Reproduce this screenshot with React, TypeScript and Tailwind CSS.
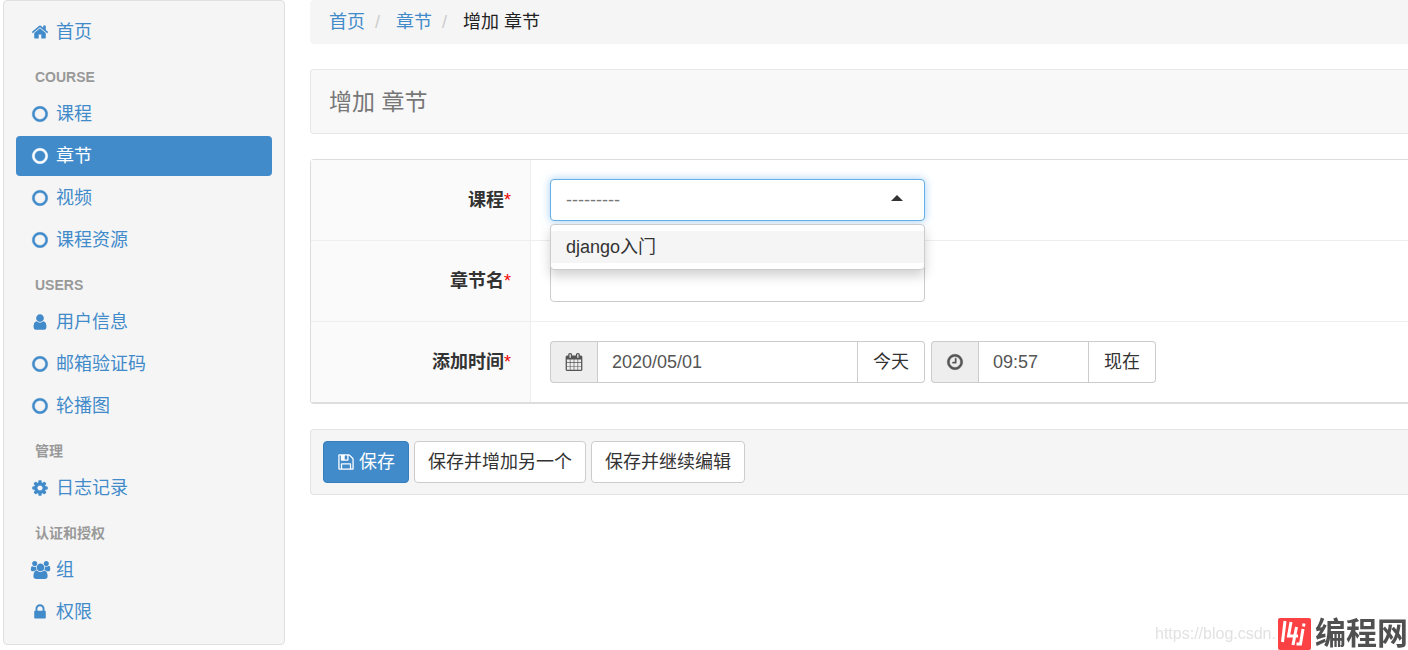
import { useState, type ReactNode } from "react";

const icons = {
  home: "M1472 992v480q0 26-19 45t-45 19h-384v-384h-256v384h-384q-26 0-45-19t-19-45v-480q0-1 .5-3t.5-3l575-474 575 474q1 2 1 6zm223-69l-62 74q-8 9-21 11h-3q-13 0-21-7l-692-577-692 577q-12 8-24 7-13-2-21-11l-62-74q-8-10-7-23.5t11-21.5l719-599q32-26 76-26t76 26l244 204v-195q0-14 9-23t23-9h192q14 0 23 9t9 23v408l219 182q10 8 11 21.5t-7 23.5z",
  circle:
    "M896 352q-148 0-273 73t-198 198-73 273 73 273 198 198 273 73 273-73 198-198 73-273-73-273-198-198-273-73zm768 544q0 209-103 385.5t-279.5 279.5-385.5 103-385.5-103-279.5-279.5-103-385.5 103-385.5 279.5-279.5 385.5-103 385.5 103 279.5 279.5 103 385.5z",
  user: "M1536 1399q0 109-62.5 187t-150.5 78h-854q-88 0-150.5-78t-62.5-187q0-85 8.5-160.5t31.5-152 58.5-131 94-89 134.5-34.5q131 128 313 128t313-128q76 0 134.5 34.5t94 89 58.5 131 31.5 152 8.5 160.5zm-256-887q0 159-112.5 271.5t-271.5 112.5-271.5-112.5-112.5-271.5 112.5-271.5 271.5-112.5 271.5 112.5 112.5 271.5z",
  cog: "M1152 896q0-106-75-181t-181-75-181 75-75 181 75 181 181 75 181-75 75-181zm512-109v222q0 12-8 23t-20 13l-185 28q-19 54-39 91 35 50 107 138 10 12 10 25t-9 23q-27 37-99 108t-94 71q-12 0-26-9l-138-108q-44 23-91 38-16 136-29 186-7 28-36 28h-222q-14 0-24.5-8.5t-11.5-21.5l-28-184q-49-16-90-37l-141 107q-10 9-25 9-14 0-25-11-126-114-165-168-7-10-7-23 0-12 8-23 15-21 51-66.5t54-70.5q-27-50-41-99l-183-27q-13-2-21-12.5t-8-23.5v-222q0-12 8-23t19-13l186-28q14-46 39-92-40-57-107-138-10-12-10-24 0-10 9-23 26-36 98.5-107.5t94.5-71.5q13 0 26 10l138 107q44-23 91-38 16-136 29-186 7-28 36-28h222q14 0 24.5 8.5t11.5 21.5l28 184q49 16 90 37l142-107q9-9 24-9 13 0 25 10 129 119 165 170 7 8 7 22 0 12-8 23-15 21-51 66.5t-54 70.5q26 50 41 98l183 28q13 2 21 12.5t8 23.5z",
  group:
    "M657 896q-162 5-265 128h-134q-82 0-138-40.5t-56-118.5q0-353 124-353 6 0 43.5 21t97.5 42.5 119 21.5q67 0 133-23-5 37-5 66 0 159 93 293zm1071 637q0 120-73 189.5t-194 69.5h-874q-121 0-194-69.5t-73-189.5q0-53 3.5-103.5t14-109 26.5-108.5 43-97.5 62-81 85.5-53.5 111.5-20q10 0 43 21.5t73 48 107 48 135 21.5 135-21.5 107-48 73-48 43-21.5q61 0 111.5 20t85.5 53.5 62 81 43 97.5 26.5 108.5 14 109 3.5 103.5zm-1024-1277q0 106-75 181t-181 75-181-75-75-181 75-181 181-75 181 75 75 181zm704 384q0 159-112.5 271.5t-271.5 112.5-271.5-112.5-112.5-271.5 112.5-271.5 271.5-112.5 271.5 112.5 112.5 271.5zm576 225q0 78-56 118.5t-138 40.5h-134q-103-123-265-128 93-134 93-293 0-29-5-66 66 23 133 23 59 0 119-21.5t97.5-42.5 43.5-21q124 0 124 353zm-128-609q0 106-75 181t-181 75-181-75-75-181 75-181 181-75 181 75 75 181z",
  lock: "M640 768h512v-192q0-106-75-181t-181-75-181 75-75 181v192zm832 96v576q0 40-28 68t-68 28h-960q-40 0-68-28t-28-68v-576q0-40 28-68t68-28h32v-192q0-184 132-316t316-132 316 132 132 316v192h32q40 0 68 28t28 68z",
  calendar:
    "M192 1664h288v-288h-288v288zm352 0h320v-288h-320v288zm-352-352h288v-320h-288v320zm352 0h320v-320h-320v320zm-352-384h288v-288h-288v288zm736 736h320v-288h-320v288zm-384-736h320v-288h-320v288zm768 736h288v-288h-288v288zm-384-352h320v-320h-320v320zm-352-864v-288q0-13-9.5-22.5t-22.5-9.5h-64q-13 0-22.5 9.5t-9.5 22.5v288q0 13 9.5 22.5t22.5 9.5h64q13 0 22.5-9.5t9.5-22.5zm736 864h288v-320h-288v320zm-384-384h320v-288h-320v288zm384 0h288v-288h-288v288zm32-480v-288q0-13-9.5-22.5t-22.5-9.5h-64q-13 0-22.5 9.5t-9.5 22.5v288q0 13 9.5 22.5t22.5 9.5h64q13 0 22.5-9.5t9.5-22.5zm384-64v1280q0 52-38 90t-90 38h-1408q-52 0-90-38t-38-90v-1280q0-52 38-90t90-38h128v-96q0-66 47-113t113-47h64q66 0 113 47t47 113v96h384v-96q0-66 47-113t113-47h64q66 0 113 47t47 113v96h128q52 0 90 38t38 90z",
  clock:
    "M1024 544v448q0 14-9 23t-23 9h-320q-14 0-23-9t-9-23v-64q0-14 9-23t23-9h224v-352q0-14 9-23t23-9h64q14 0 23 9t9 23zm416 352q0-148-73-273t-198-198-273-73-273 73-198 198-73 273 73 273 198 198 273 73 273-73 198-198 73-273zm224 0q0 209-103 385.5t-279.5 279.5-385.5 103-385.5-103-279.5-279.5-103-385.5 103-385.5 279.5-279.5 385.5-103 385.5 103 279.5 279.5 103 385.5z",
  save: "M512 1536h768v-384h-768v384zm896 0h128v-896q0-14-10-38.5t-20-34.5l-281-281q-10-10-34-20t-39-10v416q0 40-28 68t-68 28h-576q-40 0-68-28t-28-68v-416h-128v1280h128v-416q0-40 28-68t68-28h832q40 0 68 28t28 68v416zm-384-928v-320q0-13-9.5-22.5t-22.5-9.5h-192q-13 0-22.5 9.5t-9.5 22.5v320q0 13 9.5 22.5t22.5 9.5h192q13 0 22.5-9.5t9.5-22.5zm640 32v928q0 40-28 68t-68 28h-1344q-40 0-68-28t-28-68v-1344q0-40 28-68t68-28h928q40 0 88 20t76 48l280 280q28 28 48 76t20 88z",
};

type IconName = keyof typeof icons;

function Icon({ name }: { name: IconName }) {
  const wide = name === "group";
  return (
    <svg
      aria-hidden="true"
      viewBox={wide ? "0 0 2048 1792" : "0 0 1792 1792"}
      className={wide ? "h-[18px] w-[21px] shrink-0" : "h-[18px] w-[18px] shrink-0"}
      fill="currentColor"
      stroke="currentColor"
      strokeWidth={name === "circle" || name === "clock" ? 40 : 0}
    >
      <path d={icons[name]} />
    </svg>
  );
}

type Item = { label: string; icon: IconName; active?: boolean };
const sections: { title?: string; items: Item[] }[] = [
  { items: [{ label: "首页", icon: "home" }] },
  {
    title: "COURSE",
    items: [
      { label: "课程", icon: "circle" },
      { label: "章节", icon: "circle", active: true },
      { label: "视频", icon: "circle" },
      { label: "课程资源", icon: "circle" },
    ],
  },
  {
    title: "USERS",
    items: [
      { label: "用户信息", icon: "user" },
      { label: "邮箱验证码", icon: "circle" },
      { label: "轮播图", icon: "circle" },
    ],
  },
  { title: "管理", items: [{ label: "日志记录", icon: "cog" }] },
  {
    title: "认证和授权",
    items: [
      { label: "组", icon: "group" },
      { label: "权限", icon: "lock" },
    ],
  },
];

function Sidebar() {
  return (
    <nav className="w-[282px] shrink-0 rounded border border-[#e0e0e0] bg-[#f5f5f5] px-3 pt-[11px] pb-[10px]">
      {sections.map((section, i) => (
        <div key={i}>
          {section.title && (
            <h2 className="h-10 pt-[13px] pl-[19px] text-[14px] leading-5 font-bold text-[#999]">
              {section.title}
            </h2>
          )}
          <ul>
            {section.items.map((item) => (
              <li key={item.label} className="pb-[2px]">
                <a
                  href="#"
                  aria-current={item.active ? "page" : undefined}
                  className={
                    item.active
                      ? "flex h-10 items-center gap-[6px] rounded bg-[#428bca] pl-[14px] text-white"
                      : "flex h-10 items-center gap-[6px] rounded pl-[14px] text-[#428bca]"
                  }
                >
                  <span className="flex w-5 justify-center">
                    <Icon name={item.icon} />
                  </span>
                  {item.label}
                </a>
              </li>
            ))}
          </ul>
        </div>
      ))}
    </nav>
  );
}

function Row({ label, htmlFor, children }: { label: string; htmlFor: string; children: ReactNode }) {
  return (
    <div className="flex border-b border-[#eee] last:border-b-0">
      <div className="flex w-[220px] shrink-0 items-center justify-end border-r border-[#eee] bg-[#fafafa] pr-[19px] font-bold">
        <label htmlFor={htmlFor}>
          {label}
          <span className="font-normal text-[#e00]">*</span>
        </label>
      </div>
      <div className="flex flex-1 gap-[6px] py-[19px] pl-[19px]">{children}</div>
    </div>
  );
}

function Addon({ name }: { name: IconName }) {
  return (
    <span className="flex w-[47px] items-center justify-center rounded-l border border-r-0 border-[#ccc] bg-[#eee] text-[#555]">
      <Icon name={name} />
    </span>
  );
}

function Button({ children, className }: { children: ReactNode; className: string }) {
  return (
    <button
      type="button"
      className={"flex h-[42px] items-center gap-1 border whitespace-nowrap " + className}
    >
      {children}
    </button>
  );
}

function Watermark() {
  return (
    <div className="pointer-events-none fixed right-0 bottom-0 flex h-8 items-center">
      <span className="w-[123px] text-base leading-6 whitespace-nowrap text-[#e2e2e2]">
        https://blog.csdn.
      </span>
      <svg aria-hidden="true" viewBox="0 0 33 32" className="h-8 w-[33px]">
        <rect width="33" height="32" rx="2" fill="#fb4143" />
        <g fill="none" stroke="#fff" strokeWidth="3">
          <path d="M7 3L4.500 24" />
          <path d="M13 4l-2.500 14h9.500M18.500 9l-3.500 18" />
          <path d="M25 11l-2.500 15h-4" />
          <path d="M26 5.500l-.5 3" />
        </g>
      </svg>
      <span className="pl-1 text-[31px] leading-8 font-bold text-[#505050]">编程网</span>
    </div>
  );
}

export default function App() {
  const [date, setDate] = useState("2020/05/01");
  const [time, setTime] = useState("09:57");
  return (
    <div className="flex gap-[25px] bg-white pl-[3px] font-['Liberation_Sans','Noto_Sans_CJK_SC',sans-serif] text-[18px] leading-[26px] text-[#333]">
      <Sidebar />
      <main className="flex min-w-0 flex-1 flex-col gap-[25px]">
        <nav className="flex h-11 items-center rounded-l bg-[#f5f5f5] px-[19px]" aria-label="路径">
          <a href="#" className="text-[#428bca]">首页</a>
          <span className="w-[31px] pl-[10px] text-[#ccc]">/</span>
          <a href="#" className="text-[#428bca]">章节</a>
          <span className="w-[31px] pl-[10px] text-[#ccc]">/</span>
          <span className="text-[#222]">增加 章节</span>
        </nav>

        <header className="flex h-[65px] items-center rounded-l border border-r-0 border-[#e7e7e7] bg-[#f8f8f8] px-[18px]">
          <h1 className="text-[23px] text-[#777]">增加 章节</h1>
        </header>

        <form className="flex flex-col gap-[25px]">
          <div className="rounded-l border border-r-0 border-b-2 border-[#ddd]">
            <Row label="课程" htmlFor="course">
              <div className="relative w-[375px]">
                <select
                  id="course"
                  className="block h-[42px] w-full appearance-none rounded border border-[#66afe9] bg-white px-[15px] text-[#777] shadow-[0_0_8px_rgba(102,175,233,0.6)] outline-none"
                >
                  <option>---------</option>
                </select>
                <svg
                  aria-hidden="true"
                  viewBox="0 0 12 6"
                  className="pointer-events-none absolute top-4 right-[22px] h-[6px] w-3"
                >
                  <path d="M0 6L6 0l6 6z" fill="#333" />
                </svg>
                <ul
                  role="listbox"
                  aria-label="课程"
                  className="absolute top-[45px] left-0 z-10 w-full rounded border border-[#ccc] bg-white py-[6px] shadow-[0_6px_12px_rgba(0,0,0,0.18)]"
                >
                  <li role="option" aria-selected="true" className="bg-[#f5f5f5] px-[15px] py-[3px]">
                    django入门
                  </li>
                </ul>
              </div>
            </Row>
            <Row label="章节名" htmlFor="name">
              <input
                id="name"
                type="text"
                className="h-[42px] w-[375px] rounded border border-[#ccc] px-[15px] text-[#555]"
              />
            </Row>
            <Row label="添加时间" htmlFor="date">
              <div className="flex w-[375px]">
                <Addon name="calendar" />
                <input
                  id="date"
                  type="text"
                  value={date}
                  onChange={(e) => setDate(e.target.value)}
                  className="h-[42px] min-w-0 flex-1 border border-[#ccc] px-[14px] text-[#555]"
                />
                <Button className="rounded-r border-l-0 border-[#ccc] bg-white px-[15px]">今天</Button>
              </div>
              <div className="flex w-[225px]">
                <Addon name="clock" />
                <input
                  type="text"
                  aria-label="时间"
                  value={time}
                  onChange={(e) => setTime(e.target.value)}
                  className="h-[42px] min-w-0 flex-1 border border-[#ccc] px-[14px] text-[#555]"
                />
                <Button className="rounded-r border-l-0 border-[#ccc] bg-white px-[15px]">现在</Button>
              </div>
            </Row>
          </div>

          <div className="flex gap-[5px] rounded-l border border-r-0 border-[#e3e3e3] bg-[#f5f5f5] px-3 py-[11px]">
            <Button className="rounded border-[#357ebd] bg-[#428bca] px-[13px] text-white">
              <Icon name="save" />
              保存
            </Button>
            <Button className="rounded border-[#ccc] bg-white px-[13px]">保存并增加另一个</Button>
            <Button className="rounded border-[#ccc] bg-white px-[13px]">保存并继续编辑</Button>
          </div>
        </form>
      </main>
      <Watermark />
    </div>
  );
}
